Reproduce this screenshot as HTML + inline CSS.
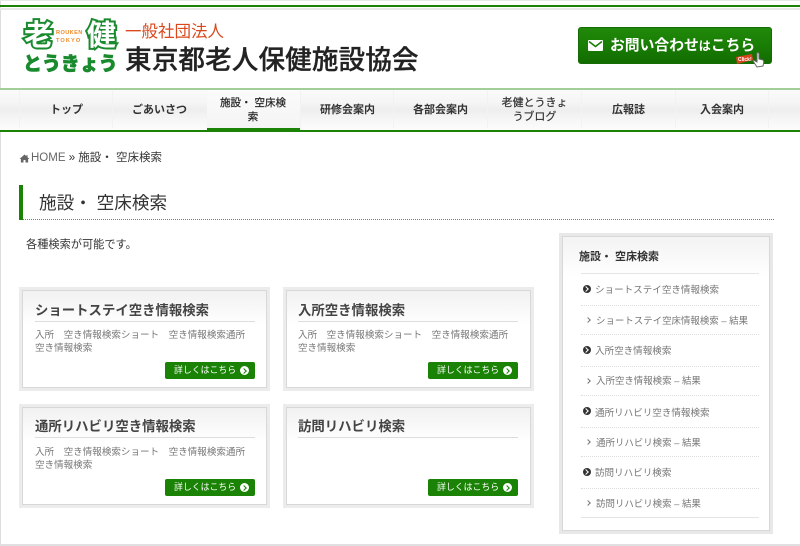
<!DOCTYPE html>
<html lang="ja"><head><meta charset="utf-8"><style>
*{box-sizing:border-box;margin:0;padding:0}
html,body{width:800px;height:546px;overflow:hidden;background:#fff}
body{position:relative;font-family:"Liberation Sans","Noto Sans CJK JP",sans-serif;color:#333}
.a{position:absolute;white-space:nowrap}
.nav{position:absolute;top:91px;height:37px;width:94px;border-left:1px solid #f2f2f2;text-align:center;font-size:11px;font-weight:bold;color:#333;display:flex;align-items:center;justify-content:center;line-height:14px;white-space:normal}
.c{position:absolute;width:251px;height:104px;background:#ececec;padding:3px}
.c>div{position:relative;width:245px;height:98px;background:linear-gradient(#f1f1f1,#fff 34px);border:1px solid #d8d8d8}
.c h3{position:absolute;left:12px;top:8px;width:220px;height:23px;border-bottom:1px solid #ddd;font-size:13.4px;line-height:23px;font-weight:bold;color:#444;white-space:nowrap}
.c p{position:absolute;left:12px;top:38px;width:222px;font-size:9.55px;line-height:13px;color:#777;white-space:nowrap}
.b{position:absolute;left:142px;top:71px;width:90px;height:17px;background:#1a8205;border-radius:2px;color:#fff;font-size:8.9px;line-height:17px;padding-left:9px;white-space:nowrap}
.b i{position:absolute;left:75px;top:4px;width:9px;height:9px;background:#fff;border-radius:50%}
.b i:after{content:"";position:absolute;left:1.5px;top:2.5px;width:3px;height:3px;border-top:1.5px solid #1a8205;border-right:1.5px solid #1a8205;transform:rotate(45deg)}
.c2 h3,.c2 p{left:11px}
.c2 .b{left:141px}
.s{position:absolute;left:581px;width:178px;height:1px;border-top:1px dotted #ddd}
.l{position:absolute;font-size:9.55px;line-height:14px;color:#777;white-space:nowrap}
.u{font-size:9.45px}
.d{position:absolute;left:583px;width:8px;height:8px;background:#333;border-radius:50%}
.d:after{content:"";position:absolute;left:1px;top:2px;width:3px;height:3px;border-top:1.5px solid #fff;border-right:1.5px solid #fff;transform:rotate(45deg)}
.g{position:absolute;left:586px;width:4px;height:4px;border-top:1px solid #777;border-right:1px solid #777;transform:rotate(45deg)}
.lg{position:absolute;white-space:nowrap;font-size:29px;line-height:32px;font-weight:bold;color:#fff;-webkit-text-stroke:4px #1a8a2e;paint-order:stroke}
</style></head><body>
<div class="a" style="left:0;top:0;width:1px;height:546px;background:#ddd"></div>
<div class="a" style="left:0;top:0;width:800px;height:1px;background:#e8e8e8"></div>
<div class="a" style="left:0;top:5px;width:800px;height:2px;background:#1a8205"></div>
<div class="a" style="left:0;top:8px;width:800px;height:2px;background:#e8e8e8"></div>
<div class="a" style="left:0;top:544px;width:800px;height:2px;background:#e0e0e0"></div>

<div class="lg" style="left:24px;top:20px">老</div>
<div class="lg" style="left:87px;top:20px">健</div>
<div class="a" style="left:56px;top:28px;font-size:5.6px;line-height:10px;font-weight:bold;color:#f08a24;letter-spacing:.4px">ROUKEN</div>
<div class="a" style="left:56px;top:36px;font-size:5.6px;line-height:10px;font-weight:bold;color:#f08a24;letter-spacing:1.1px">TOKYO</div>
<div class="a" style="left:23px;top:54px;font-size:19px;line-height:22px;font-weight:900;color:#1a8a2e;letter-spacing:-.1px;-webkit-text-stroke:.6px #1a8a2e">とうきょう</div>
<div class="a" style="left:125px;top:22px;font-size:16.5px;line-height:20px;color:#d9481c">一般社団法人</div>
<div class="a" style="left:125px;top:44px;font-size:26.6px;line-height:32px;color:#222;font-weight:500;letter-spacing:.1px;-webkit-text-stroke:.3px #222">東京都老人保健施設協会</div>

<div class="a" style="left:578px;top:27px;width:194px;height:37px;background:linear-gradient(#20880a,#1a7f05 45%,#126c00);border-radius:3px;border:1px solid #146c04"></div>
<svg class="a" style="left:588px;top:40px" width="16" height="12" viewBox="0 0 16 12"><rect width="15" height="11" rx="1" fill="#fff"/><path d="M1 1.500L7.500 6.500L14 1.500" fill="none" stroke="#1a7f05" stroke-width="1.6"/></svg>
<div class="a" style="left:610px;top:36px;font-size:14.8px;line-height:20px;font-weight:bold;color:#fff;letter-spacing:0">お問い合わせ<span style="font-size:12px">は</span>こちら</div>
<svg class="a" style="left:735px;top:50px" width="30" height="18" viewBox="0 0 30 18"><path d="M1 7L17 4L18 10L2 14Z" fill="#d9431e"/><text x="3" y="11" font-size="5" font-weight="bold" fill="#fff" font-family="Liberation Sans">Click!</text><path d="M22 3c1-1 2 0 2 1l0 5 4 1c1 1 1 2 0 6l-6 1-4-6c0-1 1-1 2 0l2 1z" fill="#fff" stroke="#666" stroke-width="1"/></svg>

<div class="a" style="left:0;top:88px;width:800px;height:44px;background:linear-gradient(#fbfbfb,#f6f6f6 30%,#eeeeee 50%,#f6f6f6 72%,#fdfdfd)"></div>
<div class="a" style="left:0;top:88px;width:800px;height:2px;background:#a2cf97"></div>
<div class="a" style="left:0;top:130px;width:800px;height:2px;background:#1a8205"></div>
<div class="a" style="left:207px;top:90px;width:93px;height:38px;background:linear-gradient(#fbfbfb,#f4f4f4)"></div>
<div class="a" style="left:207px;top:128px;width:93px;height:3px;background:#1a8205"></div>
<div class="nav" style="left:19px">トップ</div>
<div class="nav" style="left:112px">ごあいさつ</div>
<div class="nav" style="left:206px;font-weight:normal;font-size:10.5px;border:0;width:94px;padding:0 9px;color:#222;-webkit-text-stroke:.2px #222">施設・ 空床検索</div>
<div class="nav" style="left:300px">研修会案内</div>
<div class="nav" style="left:393px">各部会案内</div>
<div class="nav" style="left:487px;padding:0 9px;font-weight:normal;-webkit-text-stroke:.2px #333">老健とうきょうブログ</div>
<div class="nav" style="left:581px">広報誌</div>
<div class="nav" style="left:675px;border-right:1px solid #f2f2f2">入会案内</div>

<svg class="a" style="left:19px;top:154px" width="11" height="9" viewBox="0 0 10 9"><path d="M5 .5L0 5h1.400v3.500h2.600V6h2v2.500h2.600V5H10L8 3.200V1H7v1.200z" fill="#666"/></svg>
<div class="a" style="left:31px;top:151px;font-size:11.5px;line-height:14px;color:#666">HOME <span style="color:#333">» 施設・ 空床検索</span></div>

<div class="a" style="left:19px;top:185px;width:4px;height:35px;background:#1a8205"></div>
<div class="a" style="left:23px;top:219px;width:751px;height:1px;background:repeating-linear-gradient(90deg,#3fa52c 0 1px,#fff 1px 2px)"></div>
<div class="a" style="left:39px;top:193px;font-size:17.6px;line-height:20px;color:#333">施設・ 空床検索</div>
<div class="a" style="left:26px;top:238px;font-size:11.2px;line-height:15px;color:#333">各種検索が可能です。</div>

<div class="c" style="left:19px;top:287px"><div><h3>ショートステイ空き情報検索</h3><p>入所　空き情報検索ショート　空き情報検索通所<br>空き情報検索</p><span class="b">詳しくはこちら<i></i></span></div></div>
<div class="c c2" style="left:283px;top:287px"><div><h3>入所空き情報検索</h3><p>入所　空き情報検索ショート　空き情報検索通所<br>空き情報検索</p><span class="b">詳しくはこちら<i></i></span></div></div>
<div class="c" style="left:19px;top:404px"><div><h3 style="top:7px">通所リハビリ空き情報検索</h3><p>入所　空き情報検索ショート　空き情報検索通所<br>空き情報検索</p><span class="b">詳しくはこちら<i></i></span></div></div>
<div class="c c2" style="left:283px;top:404px"><div><h3 style="top:7px">訪問リハビリ検索</h3><span class="b">詳しくはこちら<i></i></span></div></div>

<div class="a" style="left:559px;top:233px;width:214px;height:301px;background:#e8e8e8;padding:3px"><div style="width:208px;height:295px;background:linear-gradient(#f3f3f3,#fff 40px);border:1px solid #d8d8d8"></div></div>
<div class="a" style="left:579px;top:250px;font-size:11px;line-height:14px;font-weight:bold;color:#333">施設・ 空床検索</div>
<div class="s" style="top:273px;border-top-style:solid;border-color:#e5e5e5"></div>
<div class="s" style="top:305px"></div><div class="s" style="top:334px"></div><div class="s" style="top:366px"></div><div class="s" style="top:395px"></div><div class="s" style="top:427px"></div><div class="s" style="top:456px"></div><div class="s" style="top:488px"></div><div class="s" style="top:517px;border-top-style:solid;border-color:#e5e5e5"></div>
<i class="d" style="top:285px"></i><div class="l" style="left:595px;top:284px">ショートステイ空き情報検索</div>
<i class="g" style="top:318px"></i><div class="l u" style="left:596px;top:315px">ショートステイ空床情報検索 – 結果</div>
<i class="d" style="top:346px"></i><div class="l" style="left:595px;top:345px">入所空き情報検索</div>
<i class="g" style="top:379px"></i><div class="l u" style="left:596px;top:375px">入所空き情報検索 – 結果</div>
<i class="d" style="top:407px"></i><div class="l" style="left:595px;top:407px">通所リハビリ空き情報検索</div>
<i class="g" style="top:440px"></i><div class="l u" style="left:596px;top:437px">通所リハビリ検索 – 結果</div>
<i class="d" style="top:468px"></i><div class="l" style="left:595px;top:467px">訪問リハビリ検索</div>
<i class="g" style="top:501px"></i><div class="l u" style="left:596px;top:498px">訪問リハビリ検索 – 結果</div>
</body></html>
